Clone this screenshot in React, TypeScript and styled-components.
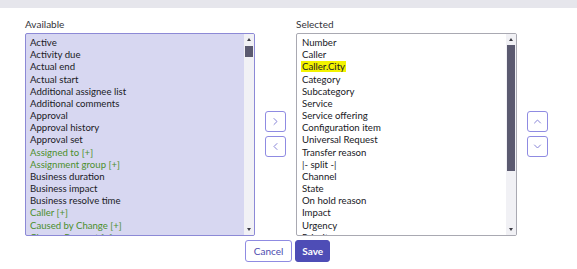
import React from 'react';
import styled, { createGlobalStyle } from 'styled-components';

const GlobalStyle = createGlobalStyle`
  html, body {
    margin: 0;
    padding: 0;
    background: #ffffff;
    font-family: Lato, 'Liberation Sans', sans-serif;
  }
`;

const Page = styled.div`
  width: 577px;
  height: 269px;
  overflow: hidden;
  background: #ffffff;
  color: #2e2e33;
`;

const TopBand = styled.div`
  height: 8px;
  background: #e6e6ec;
`;

const Slushbucket = styled.div`
  display: grid;
  grid-template-columns: 230px 21px 221px 21px;
  grid-template-rows: auto 203px;
  column-gap: 10px;
  row-gap: 3px;
  padding: 10px 0 0 25px;
`;

const Label = styled.div`
  font-size: 10px;
  line-height: 12px;
  color: #33333a;
`;

const ListBox = styled.div<{ $active?: boolean }>`
  display: flex;
  box-sizing: border-box;
  height: 203px;
  border: 1px solid ${(p) => (p.$active ? '#8c89d6' : '#a9a9b2')};
  border-radius: 2px;
  background: ${(p) => (p.$active ? '#d7d7f1' : '#ffffff')};
  overflow: hidden;
`;

const Options = styled.ul<{ $indent: number }>`
  flex: 1;
  margin: 0;
  padding: 3px 0 0 ${(p) => p.$indent}px;
  list-style: none;
  overflow: hidden;
`;

const Option = styled.li<{ $reference?: boolean }>`
  font-size: 9.6px;
  line-height: 12.17px;
  white-space: nowrap;
  color: ${(p) => (p.$reference ? '#4c8f2c' : '#202025')};
`;

const Highlight = styled.span`
  background: #f3f300;
  margin-left: -1px;
  padding: 0 1px;
`;

const Track = styled.div`
  display: flex;
  flex-direction: column;
  align-items: center;
  width: 10px;
  background: #f1f1f5;
`;

const Arrow = styled.div<{ $down?: boolean }>`
  width: 0;
  height: 0;
  margin: ${(p) => (p.$down ? 'auto 0 4px' : '4px 0 0')};
  border-left: 2.5px solid transparent;
  border-right: 2.5px solid transparent;
  ${(p) => (p.$down ? 'border-top: 3px solid #3c3c44;' : 'border-bottom: 3px solid #3c3c44;')}
`;

const Thumb = styled.div<{ $offset: number; $size: number }>`
  width: 8px;
  height: ${(p) => p.$size}px;
  margin-top: ${(p) => p.$offset}px;
  background: #5b5a70;
`;

const MoveColumn = styled.div`
  display: flex;
  flex-direction: column;
  justify-content: center;
  gap: 4px;
  padding-bottom: 2px;
`;

const IconButton = styled.button`
  display: flex;
  align-items: center;
  justify-content: center;
  box-sizing: border-box;
  width: 21px;
  height: 21px;
  padding: 0;
  border: 1px solid #8f8be2;
  border-radius: 3px;
  background: #ffffff;
  color: #8784d8;
`;

const Footer = styled.div`
  display: flex;
  justify-content: center;
  gap: 3px;
  padding: 4px 2px 0 0;
`;

const ActionButton = styled.button<{ $primary?: boolean }>`
  box-sizing: border-box;
  height: 22px;
  padding: 0 ${(p) => (p.$primary ? 6 : 8)}px;
  border: 1px solid ${(p) => (p.$primary ? '#4e4db6' : '#8f8be2')};
  border-radius: 3px;
  background: ${(p) => (p.$primary ? '#4e4db6' : '#ffffff')};
  color: ${(p) => (p.$primary ? '#ffffff' : '#4d4caf')};
  font-family: Lato, 'Liberation Sans', sans-serif;
  font-size: 10px;
  font-weight: ${(p) => (p.$primary ? 700 : 400)};
`;

type Field = { label: string; reference?: boolean; highlight?: boolean };

const available: Field[] = [
  { label: 'Active' },
  { label: 'Activity due' },
  { label: 'Actual end' },
  { label: 'Actual start' },
  { label: 'Additional assignee list' },
  { label: 'Additional comments' },
  { label: 'Approval' },
  { label: 'Approval history' },
  { label: 'Approval set' },
  { label: 'Assigned to [+]', reference: true },
  { label: 'Assignment group [+]', reference: true },
  { label: 'Business duration' },
  { label: 'Business impact' },
  { label: 'Business resolve time' },
  { label: 'Caller [+]', reference: true },
  { label: 'Caused by Change [+]', reference: true },
  { label: 'Change Request [+]', reference: true },
];

const selected: Field[] = [
  { label: 'Number' },
  { label: 'Caller' },
  { label: 'Caller.City', highlight: true },
  { label: 'Category' },
  { label: 'Subcategory' },
  { label: 'Service' },
  { label: 'Service offering' },
  { label: 'Configuration item' },
  { label: 'Universal Request' },
  { label: 'Transfer reason' },
  { label: '|- split -|' },
  { label: 'Channel' },
  { label: 'State' },
  { label: 'On hold reason' },
  { label: 'Impact' },
  { label: 'Urgency' },
  { label: 'Priority' },
];

const Chevron = ({ d }: { d: string }) => (
  <svg width="9" height="9" viewBox="0 0 9 9" fill="none">
    <path d={d} stroke="currentColor" strokeWidth="1" strokeLinecap="round" strokeLinejoin="round" />
  </svg>
);

const FieldList = ({
  fields,
  active,
  indent,
  thumbOffset,
  thumbSize,
}: {
  fields: Field[];
  active?: boolean;
  indent: number;
  thumbOffset: number;
  thumbSize: number;
}) => (
  <ListBox $active={active}>
    <Options $indent={indent}>
      {fields.map((f) => (
        <Option key={f.label} $reference={f.reference}>
          {f.highlight ? <Highlight>{f.label}</Highlight> : f.label}
        </Option>
      ))}
    </Options>
    <Track>
      <Arrow />
      <Thumb $offset={thumbOffset} $size={thumbSize} />
      <Arrow $down />
    </Track>
  </ListBox>
);

export default function App() {
  return (
    <Page>
      <GlobalStyle />
      <TopBand />
      <Slushbucket>
        <Label>Available</Label>
        <span />
        <Label>Selected</Label>
        <span />
        <FieldList fields={available} active indent={4} thumbOffset={5} thumbSize={11} />
        <MoveColumn>
          <IconButton aria-label="Add">
            <Chevron d="M3 1.5 L6 4.5 L3 7.5" />
          </IconButton>
          <IconButton aria-label="Remove">
            <Chevron d="M6 1.5 L3 4.5 L6 7.5" />
          </IconButton>
        </MoveColumn>
        <FieldList fields={selected} indent={5} thumbOffset={4} thumbSize={126} />
        <MoveColumn>
          <IconButton aria-label="Move up">
            <Chevron d="M1.5 6 L4.5 3 L7.5 6" />
          </IconButton>
          <IconButton aria-label="Move down">
            <Chevron d="M1.5 3 L4.5 6 L7.5 3" />
          </IconButton>
        </MoveColumn>
      </Slushbucket>
      <Footer>
        <ActionButton>Cancel</ActionButton>
        <ActionButton $primary>Save</ActionButton>
      </Footer>
    </Page>
  );
}
